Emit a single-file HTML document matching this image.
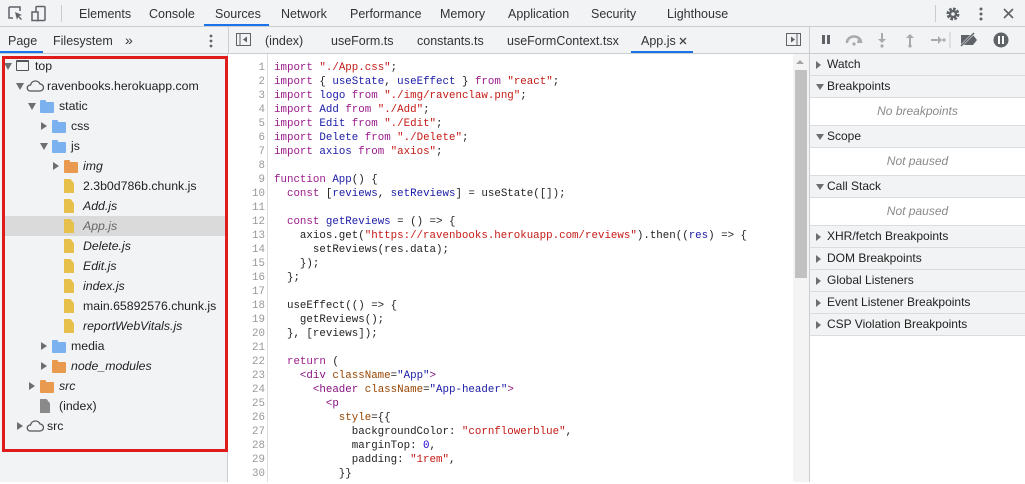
<!DOCTYPE html>
<html><head><meta charset="utf-8"><style>
*{box-sizing:border-box;margin:0;padding:0}
body{width:1025px;height:482px;overflow:hidden;background:#fff;font-family:"Liberation Sans",sans-serif;font-size:12px;color:#333;position:relative}
.abs{position:absolute;white-space:nowrap}
.bar1{position:absolute;left:0;top:0;width:1025px;height:27px;background:#f1f3f4;border-bottom:1px solid #cacdd1}
.bar2{position:absolute;left:0;top:27px;width:1025px;height:27px;background:#f1f3f4;border-bottom:1px solid #cacdd1}
.tab{position:absolute;top:7px;font-size:12.5px;color:#333}
.left{position:absolute;left:0;top:54px;width:228px;height:428px;background:#f1f3f4;border-right:1px solid #cacdd1}
.red{position:absolute;left:2px;top:56px;width:226px;height:396px;border:3px solid #e01b1b}
.row{position:absolute;height:20px;line-height:20px;font-size:12.3px;color:#222;white-space:nowrap}
.arr{position:absolute;width:0;height:0}
.ad{border-left:4px solid transparent;border-right:4px solid transparent;border-top:7px solid #6e6e6e}
.ar{border-top:4px solid transparent;border-bottom:4px solid transparent;border-left:6px solid #6e6e6e}
.fold{position:absolute;width:14px;height:11px;border-radius:1px}
.fold:before{content:"";position:absolute;left:0;top:-2px;width:6px;height:3px;background:inherit;border-radius:1px 1px 0 0}
.file{position:absolute;width:10px;height:14px;background:#e6c04a;clip-path:polygon(0 0,65% 0,100% 30%,100% 100%,0 100%)}
.code{position:absolute;left:230px;top:54px;width:563px;height:428px;background:#fff}
.gut{position:absolute;left:230px;top:54px;width:38px;height:428px;border-right:1px solid #ddd;background:#fff}
.cw{position:absolute;left:0;top:2px;width:1025px;height:482px}
.ln{position:absolute;left:230px;width:35px;text-align:right;font-family:"Liberation Mono",monospace;font-size:10.8px;color:#999;height:14px;line-height:14px}
.cl{position:absolute;left:274px;font-family:"Liberation Mono",monospace;font-size:10.8px;color:#222;height:14px;line-height:14px;white-space:pre}
.k{color:#9a1b8b}.s{color:#c41a16}.d{color:#1a1aa6}.a{color:#994500}.t{color:#881280}.n{color:#1c00cf}
.right{position:absolute;left:809px;top:54px;width:216px;height:428px;background:#fff;border-left:1px solid #cacdd1}
.hd{position:absolute;left:810px;width:215px;height:22px;line-height:21px;background:#f1f3f4;border-bottom:1px solid #dadce0;font-size:12px;color:#222;padding-left:17px}
.hd:before{content:"";position:absolute;left:6px;top:7px}
.hr:before{border-top:4px solid transparent;border-bottom:4px solid transparent;border-left:5px solid #6e6e6e}
.hdn:before{top:8px;border-left:4px solid transparent;border-right:4px solid transparent;border-top:6px solid #6e6e6e}
.np{position:absolute;left:810px;width:215px;text-align:center;font-style:italic;color:#8a8a8a;font-size:12px;height:28px;line-height:26px;border-bottom:1px solid #dadce0}
</style></head><body>
<div class="bar1"></div>
<svg class="abs" style="left:7px;top:5px" width="40" height="18" viewBox="0 0 40 18"><path d="M2 2h11v4M2 2v11h4" fill="none" stroke="#5f6368" stroke-width="1.5"/><path d="M8 7l7 3-3 1 3 3-1 1-3-3-1 3z" fill="#5f6368"/><rect x="29" y="1.5" width="9" height="14" rx="1" fill="none" stroke="#5f6368" stroke-width="1.5"/><rect x="25" y="7" width="6" height="8.5" fill="#f1f3f4" stroke="#5f6368" stroke-width="1.5"/></svg>
<div class="abs" style="left:61px;top:5px;width:1px;height:17px;background:#ccc"></div>
<div class="tab" style="left:79px">Elements</div>
<div class="tab" style="left:149px">Console</div>
<div class="tab" style="left:215px">Sources</div>
<div class="abs" style="left:204px;top:24px;width:65px;height:2px;background:#1a73e8"></div>
<div class="tab" style="left:281px">Network</div>
<div class="tab" style="left:350px">Performance</div>
<div class="tab" style="left:440px">Memory</div>
<div class="tab" style="left:508px">Application</div>
<div class="tab" style="left:591px">Security</div>
<div class="tab" style="left:667px">Lighthouse</div>
<div class="abs" style="left:935px;top:5px;width:1px;height:17px;background:#ccc"></div>
<svg class="abs" style="left:945px;top:6px" width="16" height="16" viewBox="0 0 16 16"><circle cx="8" cy="8" r="5" fill="none" stroke="#5f6368" stroke-width="3" stroke-dasharray="2.6 1.3"/><circle cx="8" cy="8" r="4.2" fill="#5f6368"/><circle cx="8" cy="8" r="1.8" fill="#f1f3f4"/></svg>
<svg class="abs" style="left:978px;top:6px" width="6" height="16"><circle cx="3" cy="3" r="1.5" fill="#5f6368"/><circle cx="3" cy="8" r="1.5" fill="#5f6368"/><circle cx="3" cy="13" r="1.5" fill="#5f6368"/></svg>
<svg class="abs" style="left:1003px;top:8px" width="11" height="11"><path d="M1 1l9 9M10 1l-9 9" stroke="#5f6368" stroke-width="1.6"/></svg>

<div class="bar2"></div>
<div class="tab" style="left:8px;top:34px">Page</div>
<div class="abs" style="left:0;top:51px;width:43px;height:2px;background:#1a73e8"></div>
<div class="tab" style="left:53px;top:34px">Filesystem</div>
<div class="tab" style="left:125px;top:32px;font-size:14px">»</div>
<svg class="abs" style="left:208px;top:33px" width="6" height="16"><circle cx="3" cy="3" r="1.4" fill="#5f6368"/><circle cx="3" cy="8" r="1.4" fill="#5f6368"/><circle cx="3" cy="13" r="1.4" fill="#5f6368"/></svg>
<div class="abs" style="left:228px;top:27px;width:1px;height:27px;background:#cacdd1"></div>
<svg class="abs" style="left:236px;top:33px" width="16" height="14"><rect x="0.5" y="0.5" width="14" height="12" fill="none" stroke="#5f6368"/><path d="M4 1v11" stroke="#5f6368"/><path d="M11 3.5v6l-4-3z" fill="#5f6368"/></svg>
<div class="tab" style="left:265px;top:34px">(index)</div>
<div class="tab" style="left:331px;top:34px">useForm.ts</div>
<div class="tab" style="left:417px;top:34px">constants.ts</div>
<div class="tab" style="left:507px;top:34px">useFormContext.tsx</div>
<div class="tab" style="left:641px;top:34px">App.js</div>
<svg class="abs" style="left:679px;top:37px" width="8" height="8"><path d="M1 1l6 6M7 1l-6 6" stroke="#444" stroke-width="1.3"/></svg>
<div class="abs" style="left:631px;top:51px;width:62px;height:2px;background:#1a73e8"></div>
<svg class="abs" style="left:786px;top:33px" width="16" height="14"><rect x="0.5" y="0.5" width="14" height="12" fill="none" stroke="#5f6368"/><path d="M11 1v11" stroke="#5f6368"/><path d="M5 3.5v6l4-3z" fill="#5f6368"/></svg>
<div class="abs" style="left:809px;top:27px;width:1px;height:27px;background:#cacdd1"></div>
<svg class="abs" style="left:815px;top:30px" width="210" height="20" viewBox="0 0 210 20">
<rect x="7" y="5" width="3" height="9" fill="#5f6368"/><rect x="12" y="5" width="3" height="9" fill="#5f6368"/>
<path d="M32 13a7 6 0 0 1 14 -1" fill="none" stroke="#aaa" stroke-width="2.5"/><path d="M43 9l5 4h-6z" fill="#aaa"/><circle cx="39" cy="14" r="1.6" fill="#aaa"/>
<path d="M67 3v9" stroke="#aaa" stroke-width="2"/><path d="M63 9l4 4 4-4z" fill="#aaa"/><circle cx="67" cy="16" r="1.6" fill="#aaa"/>
<path d="M95 7v9" stroke="#aaa" stroke-width="2"/><path d="M91 8l4-4 4 4z" fill="#aaa"/><circle cx="95" cy="16" r="1.6" fill="#aaa"/>
<path d="M116 10h8" stroke="#aaa" stroke-width="2"/><path d="M123 6l4 4-4 4z" fill="#aaa"/><circle cx="129" cy="10" r="1.6" fill="#aaa"/>
<path d="M135 2v16" stroke="#ccc"/>
<path d="M146 5h12l4 5-4 5h-12z" fill="#5f6368"/><path d="M145 17l14-14" stroke="#f1f3f4" stroke-width="2.5"/><path d="M146 16l13-13" stroke="#5f6368" stroke-width="1.5"/>
<circle cx="186" cy="10" r="7.5" fill="#5f6368"/><rect x="183" y="6" width="2" height="8" fill="#fff"/><rect x="187" y="6" width="2" height="8" fill="#fff"/>
</svg>

<div class="left"></div>
<div class="arr ad" style="left:4px;top:63px"></div>
<div class="abs" style="left:16px;top:60px;width:13px;height:11px;border:1.5px solid #555;border-top-width:2.5px;border-radius:1px"></div>
<div class="row" style="left:35px;top:56px">top</div>
<div class="arr ad" style="left:16px;top:83px"></div>
<svg class="abs" style="left:25px;top:80px" width="19" height="12"><path d="M5 11h10a3.5 3.5 0 0 0 0-7 5 5 0 0 0-9.5 1A3 3 0 0 0 5 11z" fill="none" stroke="#555" stroke-width="1.3"/></svg>
<div class="row" style="left:47px;top:76px">ravenbooks.herokuapp.com</div>
<div class="arr ad" style="left:28px;top:103px"></div>
<div class="fold" style="left:40px;top:102px;background:#7cb1f0"></div>
<div class="row" style="left:59px;top:96px">static</div>
<div class="arr ar" style="left:41px;top:122px"></div>
<div class="fold" style="left:52px;top:122px;background:#7cb1f0"></div>
<div class="row" style="left:71px;top:116px">css</div>
<div class="arr ad" style="left:40px;top:143px"></div>
<div class="fold" style="left:52px;top:142px;background:#7cb1f0"></div>
<div class="row" style="left:71px;top:136px">js</div>
<div class="arr ar" style="left:53px;top:162px"></div>
<div class="fold" style="left:64px;top:162px;background:#ea9a4e"></div>
<div class="row" style="left:83px;top:156px;font-style:italic">img</div>
<div class="file" style="left:64px;top:179px"></div><div class="row" style="left:83px;top:176px">2.3b0d786b.chunk.js</div>
<div class="file" style="left:64px;top:199px"></div><div class="row" style="left:83px;top:196px;font-style:italic">Add.js</div>
<div class="abs" style="left:5px;top:216px;width:221px;height:20px;background:#dadada"></div>
<div class="file" style="left:64px;top:219px"></div><div class="row" style="left:83px;top:216px;font-style:italic;color:#666">App.js</div>
<div class="file" style="left:64px;top:239px"></div><div class="row" style="left:83px;top:236px;font-style:italic">Delete.js</div>
<div class="file" style="left:64px;top:259px"></div><div class="row" style="left:83px;top:256px;font-style:italic">Edit.js</div>
<div class="file" style="left:64px;top:279px"></div><div class="row" style="left:83px;top:276px;font-style:italic">index.js</div>
<div class="file" style="left:64px;top:299px"></div><div class="row" style="left:83px;top:296px">main.65892576.chunk.js</div>
<div class="file" style="left:64px;top:319px"></div><div class="row" style="left:83px;top:316px;font-style:italic">reportWebVitals.js</div>
<div class="arr ar" style="left:41px;top:342px"></div>
<div class="fold" style="left:52px;top:342px;background:#7cb1f0"></div>
<div class="row" style="left:71px;top:336px">media</div>
<div class="arr ar" style="left:41px;top:362px"></div>
<div class="fold" style="left:52px;top:362px;background:#ea9a4e"></div>
<div class="row" style="left:71px;top:356px;font-style:italic">node_modules</div>
<div class="arr ar" style="left:29px;top:382px"></div>
<div class="fold" style="left:40px;top:382px;background:#ea9a4e"></div>
<div class="row" style="left:59px;top:376px;font-style:italic">src</div>
<div class="file" style="left:40px;top:399px;background:#8a8a8a"></div><div class="row" style="left:59px;top:396px">(index)</div>
<div class="arr ar" style="left:17px;top:422px"></div>
<svg class="abs" style="left:25px;top:420px" width="19" height="12"><path d="M5 11h10a3.5 3.5 0 0 0 0-7 5 5 0 0 0-9.5 1A3 3 0 0 0 5 11z" fill="none" stroke="#555" stroke-width="1.3"/></svg>
<div class="row" style="left:47px;top:416px">src</div>
<div class="red"></div>

<div class="code"></div>
<div class="gut"></div>
<div class="abs" style="left:793px;top:54px;width:16px;height:428px;background:#f4f4f4"></div>
<div class="abs" style="left:795px;top:70px;width:12px;height:208px;background:#c1c1c1"></div>
<div class="abs" style="left:796px;top:60px;width:0;height:0;border-left:4px solid transparent;border-right:4px solid transparent;border-bottom:4px solid #a3a3a3"></div>
<div class="cw">
<div class="ln" style="top:59px">1</div><div class="cl" style="top:59px"><span class="k">import</span> <span class="s">"./App.css"</span>;</div>
<div class="ln" style="top:73px">2</div><div class="cl" style="top:73px"><span class="k">import</span> { <span class="d">useState</span>, <span class="d">useEffect</span> } <span class="k">from</span> <span class="s">"react"</span>;</div>
<div class="ln" style="top:87px">3</div><div class="cl" style="top:87px"><span class="k">import</span> <span class="d">logo</span> <span class="k">from</span> <span class="s">"./img/ravenclaw.png"</span>;</div>
<div class="ln" style="top:101px">4</div><div class="cl" style="top:101px"><span class="k">import</span> <span class="d">Add</span> <span class="k">from</span> <span class="s">"./Add"</span>;</div>
<div class="ln" style="top:115px">5</div><div class="cl" style="top:115px"><span class="k">import</span> <span class="d">Edit</span> <span class="k">from</span> <span class="s">"./Edit"</span>;</div>
<div class="ln" style="top:129px">6</div><div class="cl" style="top:129px"><span class="k">import</span> <span class="d">Delete</span> <span class="k">from</span> <span class="s">"./Delete"</span>;</div>
<div class="ln" style="top:143px">7</div><div class="cl" style="top:143px"><span class="k">import</span> <span class="d">axios</span> <span class="k">from</span> <span class="s">"axios"</span>;</div>
<div class="ln" style="top:157px">8</div>
<div class="ln" style="top:171px">9</div><div class="cl" style="top:171px"><span class="k">function</span> <span class="d">App</span>() {</div>
<div class="ln" style="top:185px">10</div><div class="cl" style="top:185px">  <span class="k">const</span> [<span class="d">reviews</span>, <span class="d">setReviews</span>] = useState([]);</div>
<div class="ln" style="top:199px">11</div>
<div class="ln" style="top:213px">12</div><div class="cl" style="top:213px">  <span class="k">const</span> <span class="d">getReviews</span> = () =&gt; {</div>
<div class="ln" style="top:227px">13</div><div class="cl" style="top:227px">    axios.get(<span class="s">"https://ravenbooks.herokuapp.com/reviews"</span>).then((<span class="d">res</span>) =&gt; {</div>
<div class="ln" style="top:241px">14</div><div class="cl" style="top:241px">      setReviews(res.data);</div>
<div class="ln" style="top:255px">15</div><div class="cl" style="top:255px">    });</div>
<div class="ln" style="top:269px">16</div><div class="cl" style="top:269px">  };</div>
<div class="ln" style="top:283px">17</div>
<div class="ln" style="top:297px">18</div><div class="cl" style="top:297px">  useEffect(() =&gt; {</div>
<div class="ln" style="top:311px">19</div><div class="cl" style="top:311px">    getReviews();</div>
<div class="ln" style="top:325px">20</div><div class="cl" style="top:325px">  }, [reviews]);</div>
<div class="ln" style="top:339px">21</div>
<div class="ln" style="top:353px">22</div><div class="cl" style="top:353px">  <span class="k">return</span> (</div>
<div class="ln" style="top:367px">23</div><div class="cl" style="top:367px">    <span class="t">&lt;div</span> <span class="a">className</span>=<span class="d">"App"</span><span class="t">&gt;</span></div>
<div class="ln" style="top:381px">24</div><div class="cl" style="top:381px">      <span class="t">&lt;header</span> <span class="a">className</span>=<span class="d">"App-header"</span><span class="t">&gt;</span></div>
<div class="ln" style="top:395px">25</div><div class="cl" style="top:395px">        <span class="t">&lt;p</span></div>
<div class="ln" style="top:409px">26</div><div class="cl" style="top:409px">          <span class="a">style</span>={{</div>
<div class="ln" style="top:423px">27</div><div class="cl" style="top:423px">            backgroundColor: <span class="s">"cornflowerblue"</span>,</div>
<div class="ln" style="top:437px">28</div><div class="cl" style="top:437px">            marginTop: <span class="n">0</span>,</div>
<div class="ln" style="top:451px">29</div><div class="cl" style="top:451px">            padding: <span class="s">"1rem"</span>,</div>
<div class="ln" style="top:465px">30</div><div class="cl" style="top:465px">          }}</div>
</div>

<div class="right"></div>
<div class="hd hr" style="top:54px">Watch</div>
<div class="hd hdn" style="top:76px">Breakpoints</div>
<div class="np" style="top:98px">No breakpoints</div>
<div class="hd hdn" style="top:126px">Scope</div>
<div class="np" style="top:148px">Not paused</div>
<div class="hd hdn" style="top:176px">Call Stack</div>
<div class="np" style="top:198px">Not paused</div>
<div class="hd hr" style="top:226px">XHR/fetch Breakpoints</div>
<div class="hd hr" style="top:248px">DOM Breakpoints</div>
<div class="hd hr" style="top:270px">Global Listeners</div>
<div class="hd hr" style="top:292px">Event Listener Breakpoints</div>
<div class="hd hr" style="top:314px">CSP Violation Breakpoints</div>
</body></html>
